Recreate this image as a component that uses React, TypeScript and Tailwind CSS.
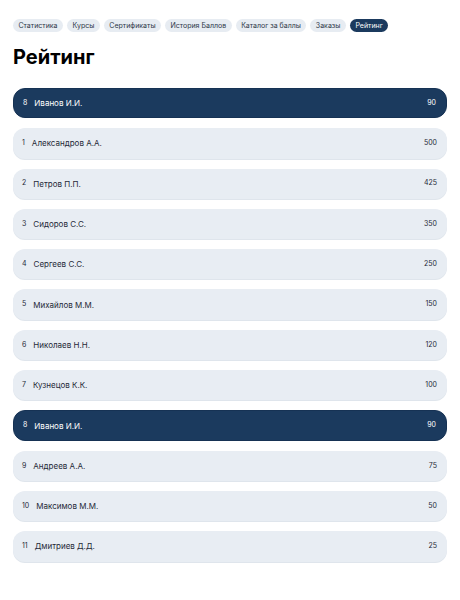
const tabs = [
  "Статистика",
  "Курсы",
  "Сертификаты",
  "История Баллов",
  "Каталог за баллы",
  "Заказы",
  "Рейтинг",
];

const rows = [
  { rank: 8, name: "Иванов И.И.", points: 90, me: true },
  { rank: 1, name: "Александров А.А.", points: 500 },
  { rank: 2, name: "Петров П.П.", points: 425 },
  { rank: 3, name: "Сидоров С.С.", points: 350 },
  { rank: 4, name: "Сергеев С.С.", points: 250 },
  { rank: 5, name: "Михайлов М.М.", points: 150 },
  { rank: 6, name: "Николаев Н.Н.", points: 120 },
  { rank: 7, name: "Кузнецов К.К.", points: 100 },
  { rank: 8, name: "Иванов И.И.", points: 90, me: true },
  { rank: 9, name: "Андреев А.А.", points: 75 },
  { rank: 10, name: "Максимов М.М.", points: 50 },
  { rank: 11, name: "Дмитриев Д.Д.", points: 25 },
];

export default function App() {
  return (
    <div
      className="min-h-screen bg-white px-[13px] pt-[19px] pb-10"
      style={{ fontFamily: "Inter, 'Noto Sans', sans-serif" }}
    >
      <nav className="flex gap-[4px]">
        {tabs.map((t) => (
          <span
            key={t}
            className={
              t === "Рейтинг"
                ? "h-[13px] px-[5.5px] rounded-full bg-[#1b3a5e] text-white text-[7px] leading-[13px]"
                : "h-[13px] px-[5.5px] rounded-full bg-[#e7ecf2] text-[#2d3748] text-[7px] leading-[13px]"
            }
          >
            {t}
          </span>
        ))}
      </nav>

      <h1 className="mt-[13px] mb-[19px] text-[20px] leading-[24px] font-bold text-black">
        Рейтинг
      </h1>

      <div className="flex flex-col gap-[10px]">
        {rows.map((r, i) => (
          <div
            key={i}
            className={
              r.me
                ? "h-[30.3px] flex items-center justify-between rounded-[12px] bg-[#1b3a5e] border border-[#163254] text-white pl-[9px] pr-[10px] text-[8px]"
                : "h-[30.3px] flex items-center justify-between rounded-[12px] bg-[#e8edf3] text-[#1f2937] pl-[9px] pr-[10px] text-[8px] shadow-[0_1px_0_#dfe5ec]"
            }
          >
            <div className="flex items-center gap-[7px]">
              <span className="text-[7px]">{r.rank}</span>
              <span>{r.name}</span>
            </div>
            <span className="text-[7px]">{r.points}</span>
          </div>
        ))}
      </div>
    </div>
  );
}
